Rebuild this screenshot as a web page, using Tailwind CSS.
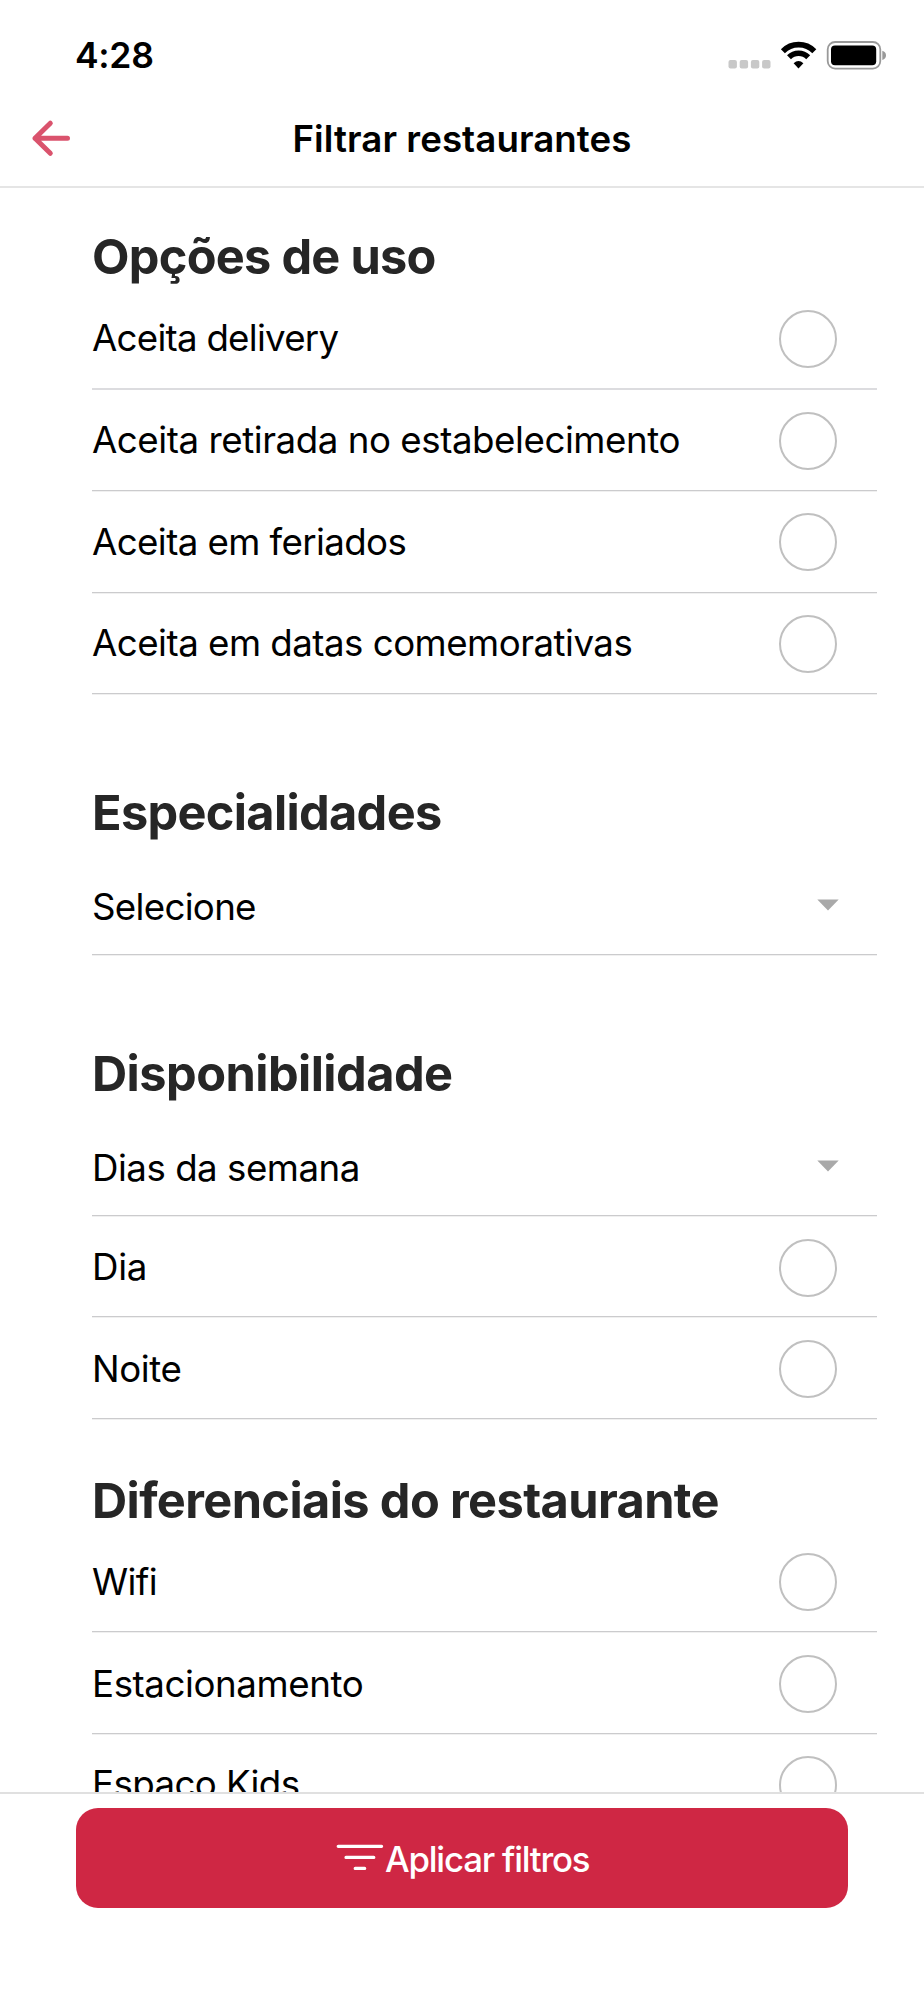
<!DOCTYPE html>
<html lang="pt-BR">
<head>
<meta charset="utf-8">
<title>Filtrar restaurantes</title>
<script src="https://cdn.jsdelivr.net/npm/@tailwindcss/browser@4"></script>
</head>
<body class="bg-white">
<div class="flex h-[2000px] w-[924px] flex-col overflow-hidden bg-white font-['Inter',sans-serif] text-[36.7px] leading-[44px] text-black">

  <!-- Status bar -->
  <div class="flex h-[90px] shrink-0 justify-between pl-[75px] pr-[36px]">
    <div class="pt-[34px] text-[35.5px] font-semibold leading-[44px] tracking-[-0.3px]">4:28</div>
    <svg class="mt-[36px] h-[36px] w-[160px]" viewBox="728 36 160 36" fill="none">
      <g fill="#c8c8c8">
        <rect x="728.5" y="60" width="8.4" height="8.4" rx="2"/>
        <rect x="739.7" y="60" width="8.4" height="8.4" rx="2"/>
        <rect x="750.9" y="60" width="8.4" height="8.4" rx="2"/>
        <rect x="762.1" y="60" width="8.4" height="8.4" rx="2"/>
      </g>
      <g stroke="#000" stroke-width="5.6">
        <path d="M782.9 51.2A22 22 0 0 1 814.3 51.2"/>
        <path d="M789 57.2A13.6 13.6 0 0 1 808.2 57.2"/>
      </g>
      <path d="M793.6 63.2Q798.5 58.8 803.4 63.2L798.5 68.4Z" fill="#000"/>
      <rect x="827.7" y="42" width="52.6" height="26.6" rx="7.5" stroke="#999" stroke-width="1.8"/>
      <rect x="831" y="45.4" width="45.2" height="19.8" rx="4" fill="#000"/>
      <path d="M882.3 50.8Q886 52 886 55.4T882.3 60Z" fill="#999"/>
    </svg>
  </div>

  <!-- Navigation header -->
  <header class="grid h-[98px] shrink-0 grid-cols-[92px_1fr_92px] border-b-2 border-[#e5e5e5]">
    <svg class="ml-[30px] mt-[28px] h-[40px] w-[42px]" viewBox="30 118 42 40" fill="none" stroke="#da536d" stroke-width="5" stroke-linecap="round" stroke-linejoin="round">
      <path d="M67.5 138.3H35M50.3 123.2L35 138.3L50.3 153.3"/>
    </svg>
    <h1 class="pt-[27px] text-center font-semibold tracking-[0.06px]">Filtrar restaurantes</h1>
  </header>

  <!-- Filter list -->
  <main class="min-h-0 flex-1 overflow-hidden pl-[92px] pr-[47px]">
    <section class="pt-[39px]">
      <h2 class="mb-[1px] text-[48.7px] font-bold leading-[60px] tracking-[-0.73px] text-[#262626]">Opções de uso</h2>
      <div class="flex h-[102px] items-end justify-between border-b-2 border-[#dcdcdf] pr-[40px]"><span class="mb-[28px] tracking-[-0.75px]">Aceita delivery</span><span class="mb-[20px] size-[58px] rounded-full border-2 border-[#c0c0c0]"></span></div>
      <div class="flex h-[101px] items-end justify-between border-b border-[#cbcbcd] pr-[40px] shadow-[0_1px_#f0f0f0]"><span class="mb-[28px] tracking-[-0.45px]">Aceita retirada no estabelecimento</span><span class="mb-[20px] size-[58px] rounded-full border-2 border-[#c0c0c0]"></span></div>
      <div class="flex h-[102px] items-end justify-between border-b border-[#cbcbcd] pr-[40px] shadow-[0_1px_#f0f0f0]"><span class="mb-[28px] tracking-[-0.6px]">Aceita em feriados</span><span class="mb-[21px] size-[58px] rounded-full border-2 border-[#c0c0c0]"></span></div>
      <div class="flex h-[101px] items-end justify-between border-b border-[#cbcbcd] pr-[40px] shadow-[0_1px_#f0f0f0]"><span class="mb-[28px] tracking-[-0.52px]">Aceita em datas comemorativas</span><span class="mb-[20px] size-[58px] rounded-full border-2 border-[#c0c0c0]"></span></div>
    </section>

    <section class="pt-[89px]">
      <h2 class="text-[48.7px] font-bold leading-[60px] tracking-[-0.67px] text-[#262626]">Especialidades</h2>
      <div class="flex h-[112px] items-end justify-between border-b border-[#cbcbcd] pr-[38px] shadow-[0_1px_#f0f0f0]"><span class="mb-[25px] tracking-[-0.7px]">Selecione</span><svg class="mb-[43px] h-[12px] w-[22px]" viewBox="0 0 22 12"><path d="M0.3 0.6H21.7L11 11.6Z" fill="#a9a9a9"/></svg></div>
    </section>

    <section class="pt-[89px]">
      <h2 class="text-[48.7px] font-bold leading-[60px] tracking-[-0.54px] text-[#262626]">Disponibilidade</h2>
      <div class="flex h-[112px] items-end justify-between border-b border-[#cbcbcd] pr-[38px] shadow-[0_1px_#f0f0f0]"><span class="mb-[25px] tracking-[-0.5px]">Dias da semana</span><svg class="mb-[43px] h-[12px] w-[22px]" viewBox="0 0 22 12"><path d="M0.3 0.6H21.7L11 11.6Z" fill="#a9a9a9"/></svg></div>
      <div class="flex h-[101px] items-end justify-between border-b border-[#cbcbcd] pr-[40px] shadow-[0_1px_#f0f0f0]"><span class="mb-[27px] tracking-[-0.3px]">Dia</span><span class="mb-[19px] size-[58px] rounded-full border-2 border-[#c0c0c0]"></span></div>
      <div class="flex h-[102px] items-end justify-between border-b border-[#cbcbcd] pr-[40px] shadow-[0_1px_#f0f0f0]"><span class="mb-[27px] tracking-[-0.4px]">Noite</span><span class="mb-[20px] size-[58px] rounded-full border-2 border-[#c0c0c0]"></span></div>
    </section>

    <section class="pt-[52px]">
      <h2 class="text-[48.7px] font-bold leading-[60px] tracking-[-0.61px] text-[#262626]">Diferenciais do restaurante</h2>
      <div class="flex h-[101px] items-end justify-between border-b border-[#cbcbcd] pr-[40px] shadow-[0_1px_#f0f0f0]"><span class="mb-[27px] tracking-[-0.6px]">Wifi</span><span class="mb-[20px] size-[58px] rounded-full border-2 border-[#c0c0c0]"></span></div>
      <div class="flex h-[102px] items-end justify-between border-b border-[#cbcbcd] pr-[40px] shadow-[0_1px_#f0f0f0]"><span class="mb-[27px] tracking-[-0.42px]">Estacionamento</span><span class="mb-[20px] size-[58px] rounded-full border-2 border-[#c0c0c0]"></span></div>
      <div class="flex h-[101px] items-end justify-between border-b border-[#cbcbcd] pr-[40px]"><span class="mb-[28px] tracking-[-0.6px]">Espaço Kids</span><span class="mb-[20px] size-[58px] rounded-full border-2 border-[#c0c0c0]"></span></div>
    </section>
  </main>

  <!-- Apply bar -->
  <footer class="h-[208px] shrink-0 border-t-2 border-[#e0e0e0] bg-white px-[76px] pt-[14px]">
    <button class="flex h-[100px] w-full items-center rounded-[22px] bg-[#cf2744] pl-[259px] text-white">
      <svg class="mr-[1px] h-[30px] w-[49px] shrink-0" viewBox="335 1843 49 30" fill="none" stroke="#fff" stroke-width="3.2" stroke-linecap="round">
        <path d="M338.2 1846.3H381.6M346 1857.4H373.8M355.2 1868.4H364.7"/>
      </svg>
      <span class="whitespace-nowrap pt-[2px] text-[34.8px] font-medium tracking-[-1.2px]">Aplicar filtros</span>
    </button>
  </footer>
</div>
</body>
</html>
